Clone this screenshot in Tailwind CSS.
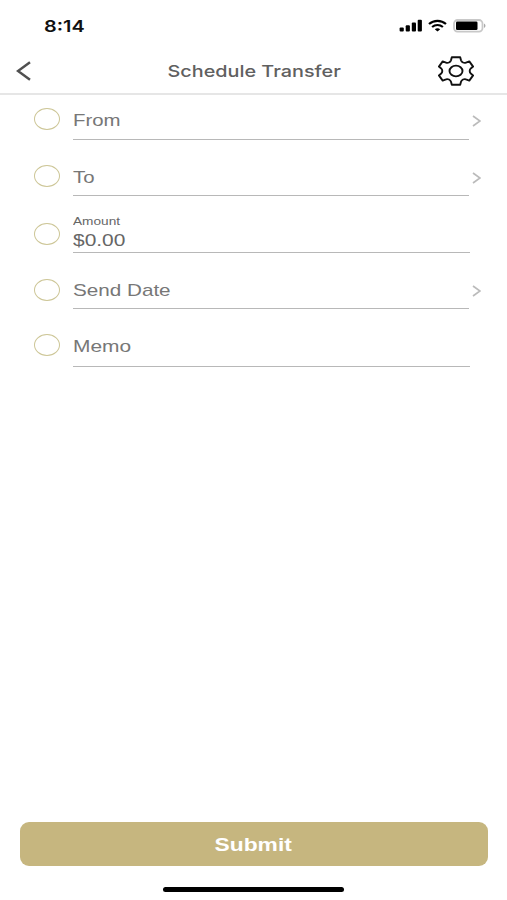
<!DOCTYPE html>
<html lang="en">
<head>
    <meta charset="UTF-8">
    <meta name="viewport" content="width=device-width, initial-scale=1.0">
    <title>Schedule Transfer</title>
    <script src="https://cdn.jsdelivr.net/npm/@tailwindcss/browser@4"></script>
</head>
<body class="bg-white font-['Liberation_Sans',sans-serif]">
    <div class="flex flex-col h-[900px] w-[507px] overflow-hidden">
        <!-- Status bar -->
        <div class="flex items-center justify-between h-[50px] pl-11 pr-5 pt-px shrink-0">
            <span class="origin-left scale-x-[1.24] font-['Inter',sans-serif] text-[16px] leading-5 font-semibold text-[#111]">8:14</span>
            <div class="flex items-center gap-[6px]">
                <svg class="w-[23px] h-[13px]" viewBox="0 0 23 13" fill="#000">
                    <rect x="0.6" y="8.5" width="4.2" height="4" rx="1"/>
                    <rect x="6.7" y="6.3" width="4.2" height="6.2" rx="1"/>
                    <rect x="12.8" y="3.6" width="4.2" height="8.9" rx="1"/>
                    <rect x="18.7" y="0.8" width="4.2" height="11.7" rx="1"/>
                </svg>
                <svg class="w-[19px] h-[13px]" viewBox="0 0 19 13" fill="none" stroke="#000" stroke-width="2.2">
                    <path d="M1 5C5.8.7 13.2.7 18 5"/>
                    <path d="M4.1 8C7.2 5.3 11.8 5.3 14.9 8"/>
                    <path d="M6.8 10.2c1.5-1.3 3.9-1.3 5.4 0L9.5 12.4z" fill="#000" stroke="none"/>
                </svg>
                <svg class="w-[34px] h-[14px]" viewBox="0 0 34 14">
                    <rect x="1" y="1" width="28.5" height="11.6" rx="3.5" fill="#fff" stroke="#c8c8c8" stroke-width="1.8"/>
                    <rect x="3" y="2.4" width="21.5" height="8.6" rx="1.3" fill="#000"/>
                    <path d="M31 4.6c2 .8 2 3.6 0 4.4z" fill="#aaa"/>
                </svg>
            </div>
        </div>

        <!-- Header -->
        <div class="grid grid-cols-[1fr_auto_1fr] items-center h-[45px] pl-4 pr-[33px] pb-[2px] border-b-2 border-[#e6e6e6] shrink-0">
            <svg class="w-4 h-5" viewBox="0 0 16 20" fill="none" stroke="#505050" stroke-width="2.5">
                <path d="M14 1.2L2 10l12 8.8"/>
            </svg>
            <h1 class="relative left-[9px] scale-x-[1.2] font-['Inter',sans-serif] text-[16.5px] leading-5 font-medium text-[#606060]">Schedule Transfer</h1>
            <svg class="w-9 h-[30px] justify-self-end" viewBox="0 0 36 30" fill="none" stroke="#111" stroke-width="1.9" stroke-linejoin="round">
                <path d="M13.8 1.2H22.2L23 4.2Q23.5 5.8 25 6.5Q26.5 7.2 28 6.6L31.3 5.4L35.1 10.6L32.8 12.4Q31.7 13.4 31.7 15Q31.7 16.6 32.8 17.6L35.1 19.4L31.3 24.6L28 23.4Q26.5 22.8 25 23.5Q23.5 24.2 23 25.8L22.2 28.8H13.8L13 25.8Q12.5 24.2 11 23.5Q9.5 22.8 8 23.4L4.7 24.6L.9 19.4L3.2 17.6Q4.3 16.6 4.3 15Q4.3 13.4 3.2 12.4L.9 10.6L4.7 5.4L8 6.6Q9.5 7.2 11 6.5Q12.5 5.8 13 4.2Z"/>
                <ellipse cx="18" cy="15" rx="6.5" ry="5.4"/>
            </svg>
        </div>

        <!-- Transfer form -->
        <form class="flex flex-col flex-1 pl-[34px] pr-[25px]">
            <div class="flex h-[45px]">
                <span class="w-[26px] h-[22px] mt-[13px] mr-[13px] shrink-0 rounded-[50%] border border-[#cdc697]"></span>
                <div class="flex items-end w-[396px] pb-[8px] border-b-[1.5px] border-[#b8b8b8]">
                    <span class="origin-left scale-x-[1.2] text-[17px] leading-5 text-[#777]">From</span>
                </div>
                <svg class="w-[9px] h-3 mt-5 ml-[3px]" viewBox="0 0 9 12" fill="none" stroke="#bbb" stroke-width="1.7"><path d="M1 1l7 5-7 5"/></svg>
            </div>
            <div class="flex h-14">
                <span class="w-[26px] h-[22px] mt-[25px] mr-[13px] shrink-0 rounded-[50%] border border-[#cdc697]"></span>
                <div class="flex items-end w-[396px] pb-[7px] border-b-[1.5px] border-[#b8b8b8]">
                    <span class="origin-left scale-x-[1.2] text-[17px] leading-5 text-[#777]">To</span>
                </div>
                <svg class="w-[9px] h-3 mt-8 ml-[3px]" viewBox="0 0 9 12" fill="none" stroke="#bbb" stroke-width="1.7"><path d="M1 1l7 5-7 5"/></svg>
            </div>
            <div class="flex h-[57px]">
                <span class="w-[26px] h-[22px] mt-[27px] mr-[13px] shrink-0 rounded-[50%] border border-[#cdc697]"></span>
                <div class="flex flex-col items-start justify-end w-[397px] pb-px border-b-[1.5px] border-[#b8b8b8]">
                    <span class="origin-left scale-x-[1.24] text-[11px] leading-3 mb-1 text-[#666]">Amount</span>
                    <span class="origin-left scale-x-[1.23] text-[17px] leading-5 text-[#666]">$0.00</span>
                </div>
            </div>
            <div class="flex h-14">
                <span class="w-[26px] h-[22px] mt-[26px] mr-[13px] shrink-0 rounded-[50%] border border-[#cdc697]"></span>
                <div class="flex items-end w-[396px] pb-[7px] border-b-[1.5px] border-[#b8b8b8]">
                    <span class="origin-left scale-x-[1.215] text-[17px] leading-5 text-[#777]">Send Date</span>
                </div>
                <svg class="w-[9px] h-3 mt-8 ml-[3px]" viewBox="0 0 9 12" fill="none" stroke="#bbb" stroke-width="1.7"><path d="M1 1l7 5-7 5"/></svg>
            </div>
            <div class="flex h-[58px]">
                <span class="w-[26px] h-[22px] mt-[25px] mr-[13px] shrink-0 rounded-[50%] border border-[#cdc697]"></span>
                <div class="flex items-end w-[397px] pb-[9px] border-b-[1.5px] border-[#b8b8b8]">
                    <span class="origin-left scale-x-[1.23] text-[17px] leading-5 text-[#777]">Memo</span>
                </div>
            </div>
        </form>

        <button type="submit" class="flex items-center justify-center h-11 ml-5 mr-[19px] pt-px pr-[2px] rounded-[9px] bg-[#c6b67f] text-white shrink-0">
            <span class="scale-x-[1.2] text-[19px] leading-5 font-bold">Submit</span>
        </button>
        <div class="w-[181px] h-[5px] mt-[21px] mb-2 mx-auto rounded-full bg-black shrink-0"></div>
    </div>
</body>
</html>
